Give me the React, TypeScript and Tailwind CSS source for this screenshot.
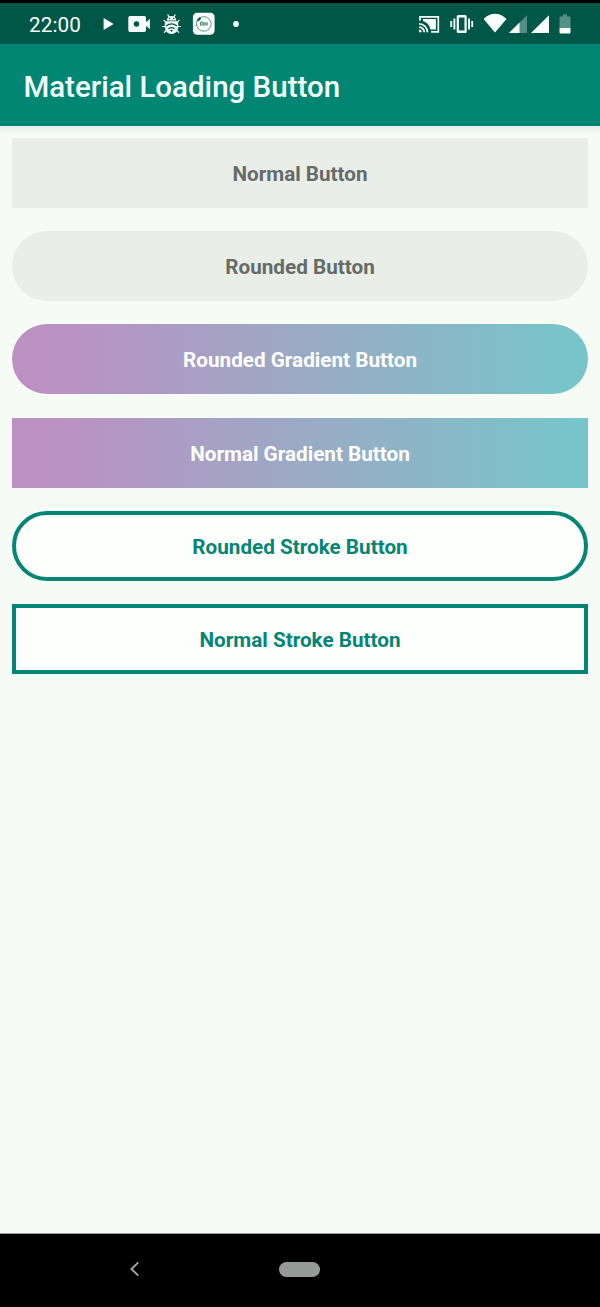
import type { ReactNode } from "react";

type ButtonSpec = { label: string; look: string };

const buttons: ButtonSpec[] = [
  { label: "Normal Button", look: "bg-[#e9eee8] text-[#666b68]" },
  { label: "Rounded Button", look: "rounded-full bg-[#e9eee8] text-[#666b68]" },
  {
    label: "Rounded Gradient Button",
    look: "rounded-full bg-[linear-gradient(90deg,#bb91c1_0%,#ba92c2_9%,#77c5c8_97%)] text-white",
  },
  {
    label: "Normal Gradient Button",
    look: "bg-[linear-gradient(90deg,#bb91c1_0%,#ba92c2_9%,#77c5c8_97%)] text-white",
  },
  {
    label: "Rounded Stroke Button",
    look: "rounded-full border-4 border-[#058573] bg-[#fdfffd] text-[#058573]",
  },
  {
    label: "Normal Stroke Button",
    look: "border-4 border-[#058573] bg-[#fdfffd] text-[#058573]",
  },
];

function Icon({ className, viewBox, children }: { className: string; viewBox: string; children: ReactNode }) {
  return (
    <svg className={`h-6 shrink-0 ${className}`} viewBox={viewBox} fill="#f8fffb" aria-hidden="true">
      {children}
    </svg>
  );
}

function StatusBar() {
  return (
    <div className="flex h-[44px] items-start border-t-[3px] border-black bg-[#005748] pt-[9px] text-[#f8fffb]">
      <span className="ml-[29px] w-[74px] text-[20.700px] leading-[26px] tracking-[0.1px]">22:00</span>
      <Icon className="w-3" viewBox="0 0 12 24">
        <path d="M.6 6v12l10-6z" />
      </Icon>
      <Icon className="ml-[13px] w-6" viewBox="0 0 24 24">
        <path
          fillRule="evenodd"
          d="M2 4h14.300q1.700 0 1.700 1.700V10l4-3v10l-4-3v4.300Q18 20 16.300 20H2Q.3 20 .3 18.300V5.700Q.3 4 2 4zm6.500 5.200a2.800 2.800 0 1 0 0 5.600 2.800 2.800 0 0 0 0-5.600z"
        />
      </Icon>
      <Icon className="ml-[8px] w-6" viewBox="0 0 24 24">
        <g stroke="#f8fffb" strokeWidth="1.200" strokeLinecap="round">
          <path d="M7.900 2.800l1.100 2M15.100 2.800l-1.100 2M3.900 8.400l2 2M19.100 8.400l-2 2M2.800 14.500H5.300M20.300 14.500h-3M4.300 20.300l2-2M18.700 20.300l-2-2" />
        </g>
        <path d="M6.700 8.500C7 5.500 9 4.100 11.500 4.100s4.500 1.400 4.800 4.400z" />
        <path d="M4.800 11Q4.800 9.200 6.600 9.200h9.800q1.800 0 1.800 1.800V15c0 4-2.900 7-6.700 7s-6.700-3-6.700-7z" />
        <circle cx="9.500" cy="6.500" r=".8" fill="#005748" />
        <circle cx="13.600" cy="6.500" r=".8" fill="#005748" />
        <path d="M6.100 14q5.400-4.300 10.800 0M8.400 16.700q3.100-2.300 6.200 0" fill="none" stroke="#005748" strokeWidth="1.300" />
        <path d="M10 18.300q1.500-1 3 0l-1.500 1.800z" fill="#005748" />
      </Icon>
      <Icon className="ml-[8px] w-6" viewBox="0 0 24 24">
        <rect x=".9" y=".8" width="21.700" height="22" rx="4.200" />
        <circle cx="11.800" cy="11.900" r="7.300" fill="none" stroke="#6b9288" strokeWidth="1" />
        <path d="M5.600 8.700l2.900-3" stroke="#005748" strokeWidth="2" />
        <path d="M8.600 13.700v-3.600h2.700v3.600M10 11.300v2.400M12.900 10.100v3.600M15.100 10.100v3.600M13 12h2" fill="none" stroke="#396b60" strokeWidth=".9" />
      </Icon>
      <Icon className="ml-[16px] w-2" viewBox="0 0 8 24">
        <circle cx="4" cy="12" r="2.900" />
      </Icon>
      <div className="ml-auto flex pr-[29px]">
        <Icon className="w-6" viewBox="0 0 24 24">
          <path
            d="M2 8.800V4.800h18.300v15.100h-7.200M1.100 11.900a8.400 8.400 0 0 1 8.400 8.400M1.100 15.100a5.200 5.200 0 0 1 5.200 5.200"
            fill="none"
            stroke="#f8fffb"
            strokeWidth="1.700"
          />
          <path d="M1.100 17.600a2.700 2.700 0 0 1 2.700 2.700H1.100zM5 7.100h12.900v10.300h-5.400C11.500 13 9 10 5 8.900z" />
        </Icon>
        <Icon className="ml-[8px] w-6" viewBox="0 0 24 24">
          <path
            fillRule="evenodd"
            d="M8.200 3h7q1.500 0 1.500 1.500v15q0 1.500-1.500 1.500h-7q-1.500 0-1.500-1.500v-15Q6.700 3 8.200 3zM8.900 5.500v13h5.600v-13zM3.400 6.500h1.900v11H3.400zM18.100 6.500H20v11h-1.900zM.3 9h1.800v6H.3zM21.300 9h1.800v6h-1.800z"
          />
        </Icon>
        <Icon className="ml-[10px] w-6" viewBox="0 0 24 24">
          <path d="M-.5 7C6.200-.1 15.800-.1 22.500 7L11 20.600z" />
        </Icon>
        <Icon className="ml-[1px] w-[18px]" viewBox="0 0 18 24">
          <path d="M18 3.200V21H0z" opacity=".33" />
          <path d="M10.500 10.600V21H0z" />
        </Icon>
        <Icon className="ml-[4px] w-[18px]" viewBox="0 0 18 24">
          <path d="M18 3.200V21H0z" />
        </Icon>
        <Icon className="ml-[10px] w-3" viewBox="0 0 12 24">
          <path d="M4 2.500h4v1.900h2.200q1.300 0 1.300 1.300V16H.5V5.700q0-1.300 1.300-1.300H4z" opacity=".35" />
          <path d="M.5 16h11v4.300q0 1.300-1.300 1.300H1.800Q.5 21.600.5 20.300z" />
        </Icon>
      </div>
    </div>
  );
}

export default function App() {
  return (
    <div className="flex h-[1307px] w-[600px] flex-col overflow-hidden bg-[#f7fbf6] font-['Roboto',sans-serif]">
      <StatusBar />
      <header className="flex h-[82px] shrink-0 items-center bg-[#008673] pt-[4px] pl-[23.400px] text-[29.500px] font-medium text-[#f3fffb]">
        <h1>Material Loading Button</h1>
      </header>
      <main className="flex flex-1 flex-col gap-[23.240px] bg-[linear-gradient(180deg,#e5eeec_0px,#f7fbf6_9px)] px-3 pt-3">
        {buttons.map(({ label, look }) => (
          <button
            key={label}
            className={`flex h-[70px] w-full shrink-0 items-center justify-center pt-[3px] text-[20.700px] font-bold ${look}`}
          >
            {label}
          </button>
        ))}
      </main>
      <nav className="flex h-[74px] shrink-0 items-center border-t border-[#999e99] bg-black pb-[3px]">
        <svg className="ml-[129px] h-4 w-3" viewBox="0 0 12 16" fill="none" stroke="#a5aaa5" strokeWidth="1.900" aria-hidden="true">
          <path d="M9.300 1.400L2.500 8l6.800 6.600" />
        </svg>
        <div className="ml-[138px] h-[15px] w-[41px] rounded-full bg-[#959b95]" />
      </nav>
    </div>
  );
}
